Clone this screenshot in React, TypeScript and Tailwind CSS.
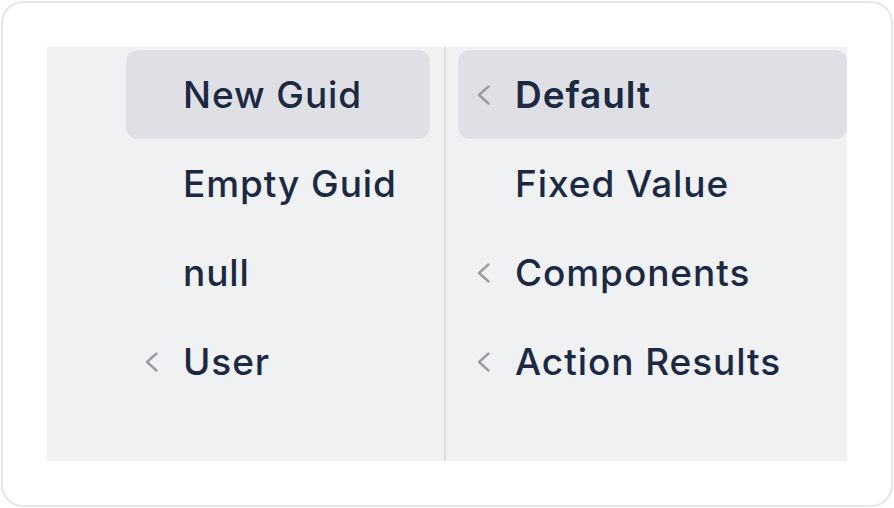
const Chevron = () => (
  <svg width="16" height="22" viewBox="0 0 16 22" fill="none">
    <polyline
      points="13.5,2.5 4,11 13.5,19.5"
      stroke="#9c9ea4"
      strokeWidth="2.5"
      strokeLinecap="round"
      strokeLinejoin="round"
    />
  </svg>
);

type Item = { label: string; sub?: boolean; active?: boolean };

const left: Item[] = [
  { label: "New Guid", active: true },
  { label: "Empty Guid" },
  { label: "null" },
  { label: "User", sub: true },
];

const right: Item[] = [
  { label: "Default", sub: true, active: true },
  { label: "Fixed Value" },
  { label: "Components", sub: true },
  { label: "Action Results", sub: true },
];

const Row = ({ item }: { item: Item }) => (
  <div
    className={[
      "flex h-[89px] items-center rounded-[12px] pl-[17px]",
      item.active ? "bg-[#dfe0e5]" : "",
    ].join(" ")}
  >
    <div className="flex w-[40px] items-center">{item.sub && <Chevron />}</div>
    <span
      className={[
        "text-[37px] leading-none tracking-[0.025em] text-[#1b2943]",
        item.active && item.sub ? "font-semibold" : "font-medium",
      ].join(" ")}
    >
      {item.label}
    </span>
  </div>
);

export default function App() {
  return (
    <div
      className="h-[508px] w-[894px] bg-white p-px"
      style={{ fontFamily: "Inter, 'Noto Sans', sans-serif" }}
    >
      <div className="h-full w-full rounded-[22px] border-2 border-[#e3e5e9] bg-white p-[44px]">
        <div className="flex h-[414px] w-[800px] bg-[#f0f1f3]">
          <div className="flex w-[397px] flex-col pl-[79px] pr-[14px] pt-[3px]">
            {left.map((item) => (
              <Row key={item.label} item={item} />
            ))}
          </div>
          <div className="w-[2px] bg-[#dcdde2]" />
          <div className="flex flex-1 flex-col pl-[12px] pt-[3px]">
            {right.map((item) => (
              <Row key={item.label} item={item} />
            ))}
          </div>
        </div>
      </div>
    </div>
  );
}
